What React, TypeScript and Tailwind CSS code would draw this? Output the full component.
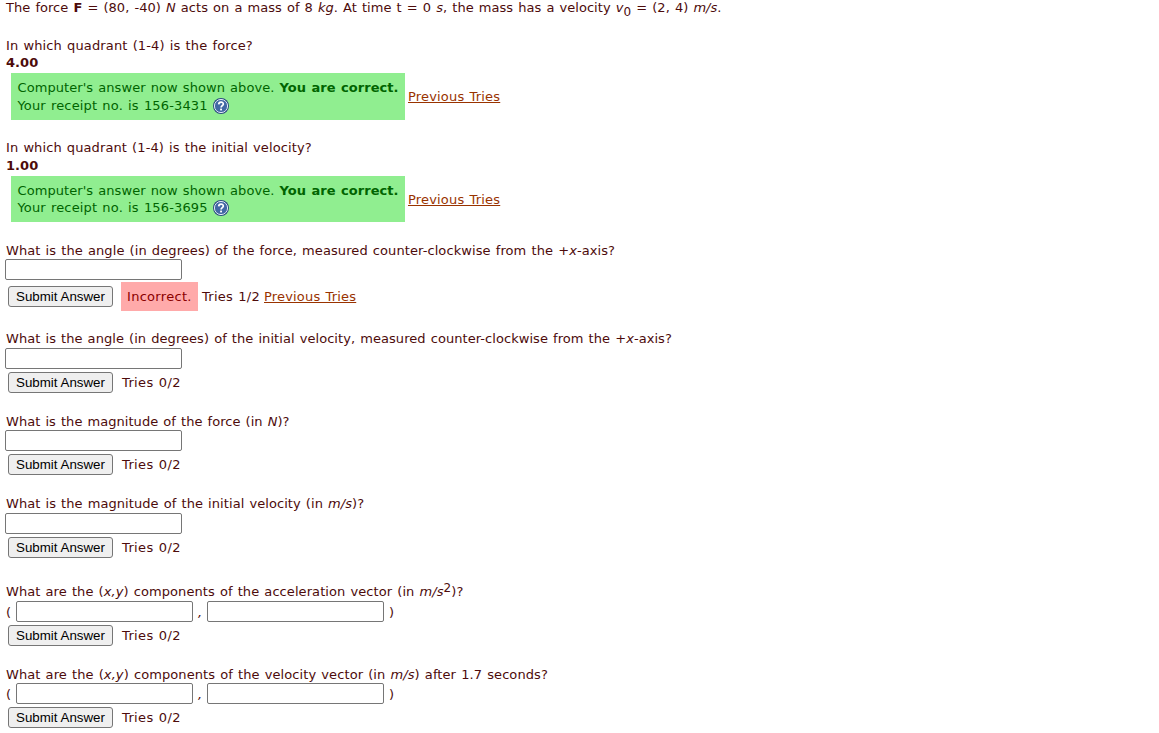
import type { ReactNode } from 'react';
import { clsx } from 'clsx';

export default function App() {
  return (
    <main className="h-[733px] overflow-hidden bg-white pl-1.5 text-[13px] leading-[17px] tracking-[0.07px] [word-spacing:0.87px] text-[#4d0b0b] font-['Verdana','DejaVu_Sans',sans-serif]">
      <Line className="-mt-px tracking-[0.05px]">
        The force <b>F</b> = (80, -40) <i>N</i> acts on a mass of 8 <i>kg</i>. At time t = 0 <i>s</i>, the mass has a
        velocity <i>v</i><span className="relative top-1 text-[12px]">0</span> = (2, 4) <i>m/s</i>.
      </Line>

      <Line className="mt-[21px] tracking-[0.13px]">In which quadrant (1-4) is the force?</Line>
      <Line className="font-bold">4.00</Line>
      <Correct receipt="156-3431" className="mt-0.5 h-[47px]" lines="leading-[18px]" />

      <Line className="mt-[19px] tracking-[0.1px]">In which quadrant (1-4) is the initial velocity?</Line>
      <Line className="mt-px font-bold">1.00</Line>
      <Correct receipt="156-3695" className="mt-0.5 h-[46px]" lines="leading-[17px]" />

      <Line className="mt-5 tracking-[0.09px]">
        What is the angle (in degrees) of the force, measured counter-clockwise from the +<i>x</i>-axis?
      </Line>
      <Answer />
      <div className="mt-0.5 flex h-[29px] items-center">
        <Submit />
        <span className="ml-2 h-[29px] w-[77px] bg-[#ffaaaa] pl-1.5 leading-[29px] tracking-[0.3px] text-[#8b0000]">Incorrect.</span>
        <span className="ml-1 w-[58px] whitespace-nowrap tracking-[0.25px]">Tries 1/2</span>
        <PreviousTries className="ml-1" />
      </div>

      <Line className="mt-[19px] tracking-[0.06px]">
        What is the angle (in degrees) of the initial velocity, measured counter-clockwise from the +<i>x</i>-axis?
      </Line>
      <Answer className="mt-px" />
      <Tries />

      <Line className="mt-5 tracking-[0.05px]">What is the magnitude of the force (in <i>N</i>)?</Line>
      <Answer />
      <Tries />

      <Line className="mt-5">What is the magnitude of the initial velocity (in <i>m/s</i>)?</Line>
      <Answer className="mt-px" />
      <Tries />

      <Line className="mt-[25px] tracking-[0.08px]">
        What are the (<i>x,y</i>) components of the acceleration vector (in <i>m/s</i>
        <span className="relative -top-1 text-[12px]">2</span>)?
      </Line>
      <Pair className="mt-px" />
      <Tries />

      <Line className="mt-5 tracking-[0.09px]">
        What are the (<i>x,y</i>) components of the velocity vector (in <i>m/s</i>) after 1.7 seconds?
      </Line>
      <Pair />
      <Tries />
    </main>
  );
}

function Line({ className, children }: { className?: string; children: ReactNode }) {
  return <div className={clsx('h-[17px] whitespace-nowrap', className)}>{children}</div>;
}

function Correct({ receipt, className, lines }: { receipt: string; className: string; lines: string }) {
  return (
    <div className={clsx('flex items-center', className)}>
      <div className={clsx('ml-[5px] h-full w-[394px] whitespace-nowrap bg-[#90ee90] pl-[6.5px] pt-1.5 text-[#006400]', lines)}>
        <div>Computer's answer now shown above. <b className="tracking-[0.04px]">You are correct.</b></div>
        <div className="flex items-center">
          <span className="w-[191px] tracking-[0.15px]">Your receipt no. is {receipt}</span>
          <HelpIcon />
        </div>
      </div>
      <PreviousTries className="ml-[3px]" />
    </div>
  );
}

function PreviousTries({ className }: { className: string }) {
  return <a href="#" className={clsx('whitespace-nowrap tracking-[0.18px] text-[#993300] underline', className)}>Previous Tries</a>;
}

function HelpIcon() {
  return (
    <svg className="ml-[4.5px] size-4 shrink-0" viewBox="0 0 16 16" role="img" aria-label="Help">
      <circle cx="8" cy="8" r="8" fill="#2b4c80" />
      <circle cx="8" cy="8" r="6.6" fill="#4268a5" stroke="#dfe8f4" strokeWidth="1" />
      <path d="M5.7 6.4C5.8 3.4 10.4 3.5 10.3 6.1C10.2 7.7 8.1 7.7 8.1 9.6" fill="none" stroke="#fff" strokeWidth="1.7" />
      <rect x="7.1" y="10.6" width="1.9" height="1.8" fill="#fff" />
    </svg>
  );
}

function Field({ className }: { className?: string }) {
  return <input type="text" className={clsx('block h-[21px] w-[177px] rounded-[2px] border border-[#767676] bg-white px-1 outline-none', className)} />;
}

function Answer({ className }: { className?: string }) {
  return (
    <div className={clsx('-ml-px', className)}>
      <Field />
    </div>
  );
}

// vector answers take two fields: ( x , y )
function Pair({ className }: { className?: string }) {
  return (
    <div className={clsx('flex h-[21px] items-center', className)}>
      <span className="w-2.5 pt-0.5">(</span>
      <Field />
      <i className="w-3.5 pl-[5px] pt-0.5">,</i>
      <Field />
      <span className="pl-[5px] pt-0.5">)</span>
    </div>
  );
}

function Submit() {
  return (
    <button
      type="button"
      className="ml-0.5 h-[21px] w-[105px] whitespace-nowrap rounded-[3px] border border-[#767676] bg-[#efefef] text-center text-[13.333px] leading-[19px] tracking-normal [word-spacing:0px] text-black font-['Arial','Liberation_Sans',sans-serif]"
    >
      Submit Answer
    </button>
  );
}

function Tries() {
  return (
    <div className="mt-[3px] flex h-[21px] items-center">
      <Submit />
      <span className="ml-[9px] tracking-[0.35px]">Tries 0/2</span>
    </div>
  );
}
